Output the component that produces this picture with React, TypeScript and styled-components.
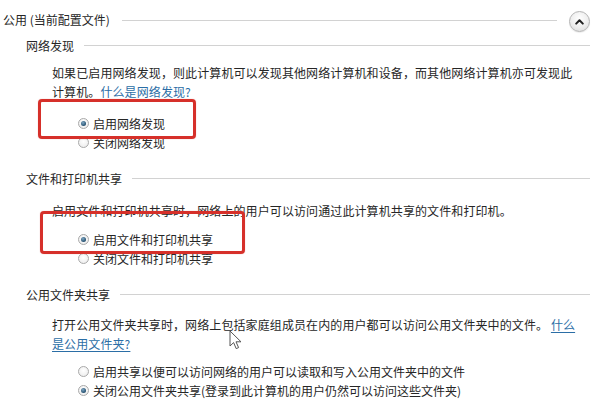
import React from "react";
import styled, { createGlobalStyle } from "styled-components";

const Global = createGlobalStyle`
  html, body { margin: 0; padding: 0; background: #fff; }
  body {
    font-family: "Noto Sans CJK SC", "Liberation Sans", sans-serif;
    font-size: 12px;
    color: #262626;
    overflow: hidden;
  }
`;

const Page = styled.div`
  position: relative;
  width: 606px;
  height: 415px;
  padding: 10px 16px 0 3px;
  box-sizing: border-box;
`;

const HeaderRow = styled.div`
  display: flex;
  align-items: center;
  height: 20px;
  gap: 12px;
`;

const HeaderText = styled.span`
  line-height: 20px;
  white-space: nowrap;
`;

const Rule = styled.div`
  flex: 1;
  height: 1px;
  background: #d2d2d2;
`;

const CollapseButton = styled.div`
  width: 19px;
  height: 19px;
  margin-top: 3px;
  border-radius: 50%;
  border: 1px solid #b4b4b4;
  background: radial-gradient(circle at 50% 35%, #ffffff 0%, #eeeeee 55%, #d8d8d8 100%);
  display: flex;
  align-items: center;
  justify-content: center;
  box-shadow: 0 1px 1px rgba(0, 0, 0, 0.08);
`;

const Section = styled.section<{ $top: number }>`
  margin-top: ${(p) => p.$top}px;
  padding-left: 23px;
`;

const SectionHead = styled.div`
  display: flex;
  align-items: center;
  gap: 10px;
  line-height: 19px;
`;

const Paragraph = styled.p<{ $top: number }>`
  margin: ${(p) => p.$top}px 0 0 26px;
  line-height: 19px;
  letter-spacing: 0.1px;
  white-space: nowrap;
`;

const Link = styled.span`
  color: #2b6ea6;
  text-decoration: underline;
  text-underline-offset: 2px;
`;

const Options = styled.div<{ $top: number }>`
  margin: ${(p) => p.$top}px 0 0 52px;
  display: flex;
  flex-direction: column;
`;

const Option = styled.label`
  display: flex;
  align-items: center;
  gap: 4px;
  line-height: 19px;
  height: 19px;
  white-space: nowrap;
`;

const RadioDot = styled.span<{ $on?: boolean }>`
  width: 11px;
  height: 11px;
  border-radius: 50%;
  border: 1px solid #a9a9a9;
  box-sizing: border-box;
  background: radial-gradient(circle at 50% 40%, #ffffff 0%, #e9e9e9 100%);
  display: inline-flex;
  align-items: center;
  justify-content: center;
  &::after {
    content: "";
    display: ${(p) => (p.$on ? "block" : "none")};
    width: 5px;
    height: 5px;
    border-radius: 50%;
    background: radial-gradient(circle at 40% 35%, #7fa7c4 0%, #24506f 70%, #173a52 100%);
  }
`;

const Highlight = styled.div<{ $x: number; $y: number; $w: number; $h: number }>`
  position: absolute;
  left: ${(p) => p.$x}px;
  top: ${(p) => p.$y}px;
  width: ${(p) => p.$w}px;
  height: ${(p) => p.$h}px;
  border: 3px solid #d6302a;
  border-radius: 4px;
  box-sizing: border-box;
  box-shadow: 0 0 1px rgba(214, 48, 42, 0.5);
  pointer-events: none;
`;

const Cursor = styled.svg`
  position: absolute;
  left: 229px;
  top: 330px;
`;

function Radio({ on, children }: { on?: boolean; children: React.ReactNode }) {
  return (
    <Option>
      <RadioDot $on={on} />
      <span>{children}</span>
    </Option>
  );
}

export default function App() {
  return (
    <>
      <Global />
      <Page>
        <HeaderRow>
          <HeaderText>公用 (当前配置文件)</HeaderText>
          <Rule />
          <CollapseButton>
            <svg width="9" height="7" viewBox="0 0 9 7">
              <path d="M1.2 5.6 L4.5 2.2 L7.8 5.6" fill="none" stroke="#222" strokeWidth="2" strokeLinecap="round" strokeLinejoin="round" />
            </svg>
          </CollapseButton>
        </HeaderRow>

        <Section $top={6}>
          <SectionHead>
            <span>网络发现</span>
            <Rule />
          </SectionHead>
          <Paragraph $top={8}>
            如果已启用网络发现，则此计算机可以发现其他网络计算机和设备，而其他网络计算机亦可发现此
            <br />
            计算机。<Link>什么是网络发现?</Link>
          </Paragraph>
          <Options $top={13}>
            <Radio on>启用网络发现</Radio>
            <Radio>关闭网络发现</Radio>
          </Options>
        </Section>

        <Section $top={17}>
          <SectionHead>
            <span>文件和打印机共享</span>
            <Rule />
          </SectionHead>
          <Paragraph $top={13}>
            启用文件和打印机共享时，网络上的用户可以访问通过此计算机共享的文件和打印机。
          </Paragraph>
          <Options $top={10}>
            <Radio on>启用文件和打印机共享</Radio>
            <Radio>关闭文件和打印机共享</Radio>
          </Options>
        </Section>

        <Section $top={17}>
          <SectionHead>
            <span>公用文件夹共享</span>
            <Rule />
          </SectionHead>
          <Paragraph $top={11}>
            打开公用文件夹共享时，网络上包括家庭组成员在内的用户都可以访问公用文件夹中的文件。 <Link>什么</Link>
            <br />
            <Link>是公用文件夹?</Link>
          </Paragraph>
          <Options $top={9}>
            <Radio>启用共享以便可以访问网络的用户可以读取和写入公用文件夹中的文件</Radio>
            <Radio on>关闭公用文件夹共享(登录到此计算机的用户仍然可以访问这些文件夹)</Radio>
          </Options>
        </Section>

        <Highlight $x={38} $y={99} $w={158} $h={40} />
        <Highlight $x={40} $y={211} $w={205} $h={43} />

        <Cursor width="14" height="21" viewBox="0 0 14 21">
          <path d="M1 1 L1 16 L4.6 12.6 L7.2 18.6 L9.6 17.6 L7 11.8 L12 11.8 Z" fill="#fff" stroke="#555" strokeWidth="1" strokeLinejoin="round" />
        </Cursor>
      </Page>
    </>
  );
}
